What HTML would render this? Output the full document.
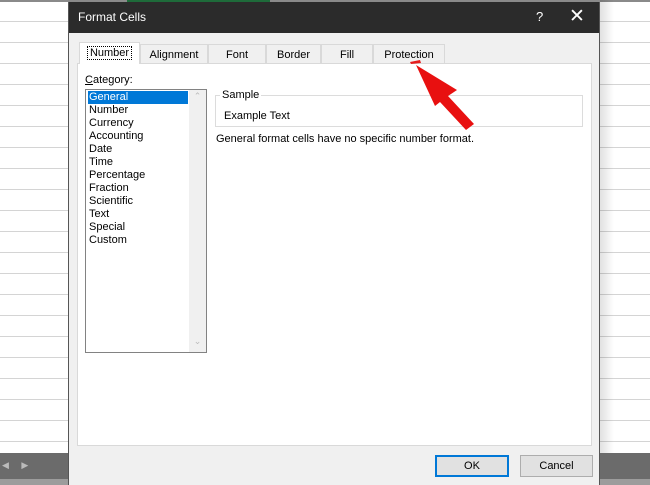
<!DOCTYPE html>
<html><head><style>
*{margin:0;padding:0;box-sizing:border-box}
body{width:650px;height:485px;position:relative;overflow:hidden;background:#fff;font-family:"Liberation Sans",sans-serif;font-size:11px;color:#000}
.a{position:absolute}
.grid{background:repeating-linear-gradient(to bottom,#fff 0,#fff 20px,#d4d4d4 20px,#d4d4d4 21px)}
.t{position:absolute;top:0;height:20px;line-height:20px;text-align:center;border:1px solid #d9d9d9;border-bottom:none;background:#f0f0f0}
.it{position:absolute;left:2px;height:13px;line-height:13px;padding-left:1px;width:100px}
</style></head><body>
<div class="a grid" style="left:0;top:1px;width:68px;height:452px"></div>
<div class="a grid" style="left:600px;top:1px;width:50px;height:452px"></div>
<div class="a" style="left:0;top:0;width:650px;height:2px;background:#8a8a8a"></div>
<div class="a" style="left:127px;top:0;width:143px;height:2px;background:#1e6b3a"></div>
<div class="a" style="left:0;top:453px;width:650px;height:32px;background:#6b6b6b"></div>
<div class="a" style="left:0;top:479px;width:650px;height:6px;background:#9c9c9c"></div>
<div class="a" style="left:2px;top:460px;color:#bbb;font-size:9px">◀&nbsp;&nbsp;&nbsp;&nbsp;&nbsp;▶</div>
<div class="a" style="left:600px;top:0;width:14px;height:453px;background:linear-gradient(to right,rgba(0,0,0,.12),rgba(0,0,0,0))"></div>
<!-- dialog -->
<div class="a" style="left:68px;top:2px;width:532px;height:483px;background:#f0f0f0;border-left:1px solid #555;border-right:1px solid #555">
 <div class="a" style="left:0;top:0;width:530px;height:31px;background:#2b2b2b;color:#fff;font-size:12px">
  <div class="a" style="left:9px;top:8px">Format Cells</div>
  <div class="a" style="left:467px;top:7px;font-size:13px">?</div>
  <div class="a" style="left:500px;top:3px;font-size:19px;font-weight:300">✕</div>
 </div>
 <div class="a" style="left:8px;top:40px;width:518px;height:22px">
  <div class="t" style="left:63px;width:68px;top:2px">Alignment</div>
  <div class="t" style="left:131px;width:58px;top:2px">Font</div>
  <div class="t" style="left:189px;width:55px;top:2px">Border</div>
  <div class="t" style="left:244px;width:52px;top:2px">Fill</div>
  <div class="t" style="left:296px;width:72px;top:2px">Protection</div>
  <div class="t" style="left:2px;width:61px;top:0;height:22px;background:#fff;z-index:2"><span style="border:1px dotted #000;padding:0 2px">Number</span></div>
 </div>
 <div class="a" style="left:8px;top:61px;width:515px;height:383px;background:#fff;border:1px solid #d9d9d9">
  <div class="a" style="left:7px;top:10px"><u>C</u>ategory:</div>
  <div class="a" style="left:7px;top:25px;width:122px;height:264px;border:1px solid #828282">
   <div class="a" style="left:103px;top:0;width:17px;height:262px;background:#f0f0f0;color:#bbb;font-size:9px;text-align:center;line-height:13px">⌃</div>
   <div class="a" style="left:103px;top:246px;width:17px;color:#bbb;font-size:9px;text-align:center">⌄</div>
   <div class="it" style="top:1px;background:#0078d7;color:#fff">General</div>
   <div class="it" style="top:14px">Number</div>
   <div class="it" style="top:27px">Currency</div>
   <div class="it" style="top:40px">Accounting</div>
   <div class="it" style="top:53px">Date</div>
   <div class="it" style="top:66px">Time</div>
   <div class="it" style="top:79px">Percentage</div>
   <div class="it" style="top:92px">Fraction</div>
   <div class="it" style="top:105px">Scientific</div>
   <div class="it" style="top:118px">Text</div>
   <div class="it" style="top:131px">Special</div>
   <div class="it" style="top:144px">Custom</div>
  </div>
  <div class="a" style="left:137px;top:31px;width:368px;height:32px;border:1px solid #dcdcdc"></div>
  <div class="a" style="left:142px;top:25px;background:#fff;padding:0 2px">Sample</div>
  <div class="a" style="left:146px;top:46px">Example Text</div>
  <div class="a" style="left:138px;top:69px">General format cells have no specific number format.</div>
 </div>
 <div class="a" style="left:366px;top:453px;width:74px;height:22px;background:#e1e1e1;border:2px solid #0078d7;text-align:center;line-height:18px">OK</div>
 <div class="a" style="left:451px;top:453px;width:73px;height:22px;background:#e1e1e1;border:1px solid #adadad;text-align:center;line-height:20px">Cancel</div>
</div>
<svg class="a" style="left:0;top:0" width="650" height="485">
 <path d="M410 62 L420 60 L421 63 L411 64 Z" fill="#e51c1c"/>
 <polygon points="416,65 457,90 448,96 474,124 466,130 440,102 435,106" fill="#e81010"/>
</svg>
</body></html>
